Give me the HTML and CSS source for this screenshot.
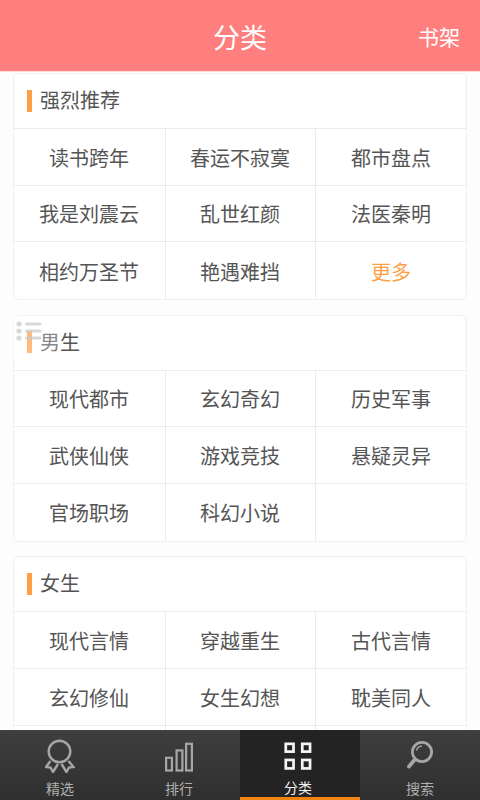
FILE: index.html
```html
<!DOCTYPE html>
<html lang="zh-CN">
<head>
    <meta charset="UTF-8">
    <meta name="viewport" content="width=device-width, initial-scale=1.0">
    <title>分类</title>
    <link rel="stylesheet" href="styles.css">
</head>
<body>
    <div class="app">
        <header class="topbar">
            <h1>分类</h1>
            <a class="shelf-link">书架</a>
        </header>

        <main class="content">
            <section class="card">
                <h2 class="card-title"><span class="mark"></span>强烈推荐</h2>
                <div class="grid">
                    <a>读书跨年</a><a>春运不寂寞</a><a>都市盘点</a>
                    <a>我是刘震云</a><a>乱世红颜</a><a>法医秦明</a>
                    <a>相约万圣节</a><a>艳遇难挡</a><a class="more">更多</a>
                </div>
            </section>

            <section class="card">
                <h2 class="card-title"><span class="mark"></span>男生</h2>
                <div class="grid">
                    <a>现代都市</a><a>玄幻奇幻</a><a>历史军事</a>
                    <a>武侠仙侠</a><a>游戏竞技</a><a>悬疑灵异</a>
                    <a>官场职场</a><a>科幻小说</a><a></a>
                </div>
            </section>

            <section class="card">
                <h2 class="card-title"><span class="mark"></span>女生</h2>
                <div class="grid">
                    <a>现代言情</a><a>穿越重生</a><a>古代言情</a>
                    <a>玄幻修仙</a><a>女生幻想</a><a>耽美同人</a>
                    <a></a><a></a><a></a>
                </div>
            </section>
        </main>

        <!-- floating menu button, sits over the second card -->
        <div class="float-menu">
            <svg width="26" height="22" viewBox="0 0 26 22">
                <circle cx="3" cy="4" r="2.6"/>
                <circle cx="3" cy="11" r="2.6"/>
                <circle cx="3" cy="18" r="2.6"/>
                <rect x="9" y="2.4" width="16.5" height="3.2" rx="1.6"/>
                <rect x="9" y="9.4" width="16.5" height="3.2" rx="1.6"/>
                <rect x="9" y="16.4" width="16.5" height="3.2" rx="1.6"/>
            </svg>
        </div>

        <nav class="tabbar">
            <a class="tab">
                <svg width="30" height="34" viewBox="0 0 30 34" fill="none" stroke="#a6a6a6" stroke-width="2.4">
                    <circle cx="14.5" cy="12.5" r="10.8"/>
                    <path d="M5.5 22 L1 28 L5.5 28.5 L8 33 L13 25"/>
                    <path d="M23.5 22 L28.5 28 L24 28.5 L21.5 33 L16.5 25"/>
                </svg>
                <span>精选</span>
            </a>
            <a class="tab shift-2">
                <svg width="28" height="34" viewBox="0 0 28 34" fill="none" stroke="#a6a6a6" stroke-width="2.2">
                    <rect x="1.1" y="18.8" width="5.8" height="12.7"/>
                    <rect x="11.6" y="11.4" width="5.8" height="20.1"/>
                    <rect x="21.1" y="4.8" width="5.8" height="26.7"/>
                </svg>
                <span>排行</span>
            </a>
            <a class="tab active">
                <svg width="28" height="34" viewBox="0 0 28 34" fill="none" stroke="#f4f4f4" stroke-width="2.8">
                    <rect x="1.4" y="5" width="8" height="8"/>
                    <rect x="18.4" y="5" width="8" height="8"/>
                    <rect x="1.4" y="21.6" width="8" height="8.7"/>
                    <rect x="18.4" y="21.6" width="8" height="8.7"/>
                </svg>
                <span>分类</span>
            </a>
            <a class="tab">
                <svg width="28" height="34" viewBox="0 0 28 34" fill="none" stroke="#a6a6a6">
                    <circle cx="16" cy="13" r="9.6" stroke-width="2.8"/>
                    <path d="M10.5 11.5 A6 6 0 0 1 16 7" stroke-width="1.4"/>
                    <path d="M8 21.5 L3 27.5" stroke-width="3.8" stroke-linecap="round"/>
                </svg>
                <span>搜索</span>
            </a>
        </nav>
    </div>
</body>
</html>
```

FILE: styles.css
```css
* {
    box-sizing: border-box;
}

body {
    margin: 0;
    background-color: #fdfdfd;
    font-family: "Noto Sans CJK SC", "Noto Sans", sans-serif;
}

.app {
    position: relative;
    display: flex;
    flex-direction: column;
    height: 800px;
    overflow: hidden;
}

.topbar {
    flex: none;
    position: relative;
    height: 72px;
    padding-top: 2px;
    background-color: #ff7f7f;
    color: #fff;
    display: flex;
    align-items: center;
    justify-content: center;
    border-bottom: 1px solid #fbd9d9;
}

.topbar h1 {
    margin: 0;
    font-size: 27px;
    font-weight: 400;
    line-height: 1;
}

.shelf-link {
    position: absolute;
    right: 20px;
    top: 26px;
    font-size: 21px;
    line-height: 1;
}

.content {
    flex: 1;
    min-height: 0;
    overflow: hidden;
    padding: 1px 13px 0;
    display: flex;
    flex-direction: column;
    gap: 14.2px;
}

.card {
    flex: none;
    background-color: #fff;
    border: 1px solid #f0f0f0;
    border-radius: 6px;
}

.card-title {
    margin: 0;
    height: 55px;
    padding: 0 0 3px 13px;
    display: flex;
    align-items: center;
    gap: 8px;
    font-size: 20px;
    font-weight: 400;
    color: #555;
    border-bottom: 1px solid #ececec;
}

.mark {
    width: 5px;
    height: 22px;
    margin-top: 2px;
    background-color: #ff9f45;
}

.grid {
    display: grid;
    grid-template-columns: 152px 150px 1fr;
    grid-auto-rows: 56.67px;
    padding-bottom: 0.5px;
}

.grid a {
    display: flex;
    align-items: center;
    justify-content: center;
    padding: 1px 1px 0 0;
    font-size: 20px;
    color: #555;
    border-bottom: 1px solid #ececec;
    border-right: 1px solid #ececec;
}

.grid a:nth-child(3n) {
    padding-right: 0;
    border-right: none;
}

.grid a:nth-last-child(-n+3) {
    border-bottom: none;
}

.grid .more {
    color: #ff9f45;
}

.float-menu {
    position: absolute;
    left: -4px;
    top: 298px;
    width: 66px;
    height: 66px;
    border-radius: 50%;
    background-color: rgba(255, 255, 255, 0.3);
    display: flex;
    align-items: center;
    justify-content: center;
}

.float-menu svg {
    fill: rgba(200, 200, 200, 0.7);
}

.tabbar {
    flex: none;
    height: 70px;
    display: flex;
    background: linear-gradient(#444 0, #3e3e3e 2px, #2f2f2f 100%);
}

.tab {
    flex: none;
    width: 25%;
    display: flex;
    flex-direction: column;
    align-items: center;
    padding-top: 9px;
    font-size: 14px;
    line-height: 20px;
    color: #b0b0b0;
}

.tab svg {
    display: block;
    margin-bottom: 5px;
}

.tab.shift-2 {
    padding-right: 2px;
}

.tab.active {
    padding-right: 4px;
    background: #232323;
    color: #f4f4f4;
    border-bottom: 3px solid #ef8412;
}
```
